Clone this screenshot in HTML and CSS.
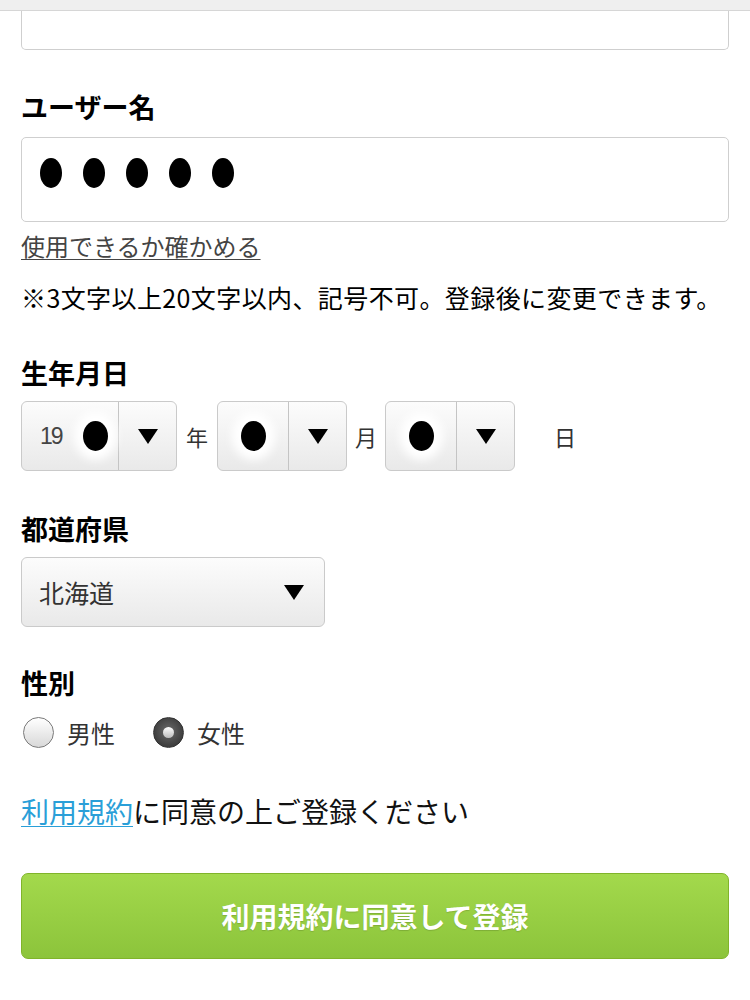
FILE: index.html
```html
<!DOCTYPE html>
<html lang="ja">
<head>
    <meta charset="UTF-8">
    <meta name="viewport" content="width=device-width, initial-scale=1.0">
    <title>会員登録</title>
    <link rel="stylesheet" href="styles.css">
</head>
<body>
    <div class="topbar"></div>

    <div class="container">
        <!-- 前の入力欄（上部が見切れている） -->
        <div class="field-cut"></div>

        <!-- ユーザー名 -->
        <h2 class="label label-user">ユーザー名</h2>
        <div class="text-input">
            <span class="dot"></span>
            <span class="dot"></span>
            <span class="dot"></span>
            <span class="dot"></span>
            <span class="dot"></span>
        </div>
        <a href="#" class="check-link">使用できるか確かめる</a>
        <p class="note">※3文字以上20文字以内、記号不可。登録後に変更できます。</p>

        <!-- 生年月日 -->
        <h2 class="label label-birth">生年月日</h2>
        <div class="birth-row">
            <div class="select select-year">
                <span class="select-value"><span class="year-prefix">19</span><span class="mask"></span></span>
                <span class="select-btn"><span class="arrow"></span></span>
            </div>
            <span class="unit">年</span>
            <div class="select select-small">
                <span class="select-value"><span class="mask"></span></span>
                <span class="select-btn"><span class="arrow"></span></span>
            </div>
            <span class="unit unit-month">月</span>
            <div class="select select-small">
                <span class="select-value"><span class="mask"></span></span>
                <span class="select-btn"><span class="arrow"></span></span>
            </div>
            <span class="unit unit-day">日</span>
        </div>

        <!-- 都道府県 -->
        <h2 class="label label-pref">都道府県</h2>
        <div class="select select-pref">
            <span class="pref-value">北海道</span>
            <span class="arrow"></span>
        </div>

        <!-- 性別 -->
        <h2 class="label label-sex">性別</h2>
        <div class="radio-row">
            <label class="radio">
                <span class="radio-circle"></span>
                <span class="radio-text">男性</span>
            </label>
            <label class="radio">
                <span class="radio-circle checked"></span>
                <span class="radio-text">女性</span>
            </label>
        </div>

        <p class="agree"><a href="#" class="terms-link">利用規約</a>に同意の上ご登録ください</p>

        <button class="submit">利用規約に同意して登録</button>
    </div>
</body>
</html>
```

FILE: styles.css
```css
body {
    margin: 0;
    background: #fff;
    color: #000;
    font-family: "Noto Sans CJK JP", "Noto Sans", sans-serif;
}

.topbar {
    height: 10px;
    background-color: #efefef;
    border-bottom: 1px solid #d6d6d6;
}

.container {
    padding: 0 21px 40px;
}

.field-cut {
    height: 38px;
    border: 1px solid #cfcfcf;
    border-top: none;
    border-radius: 0 0 5px 5px;
}

/* 見出し */
.label {
    margin: 0;
    font-size: 27px;
    line-height: 27px;
    font-weight: bold;
}

.label-user {
    margin-top: 43px;
}

.label-birth {
    margin-top: 49px;
}

.label-pref {
    margin-top: 44px;
}

.label-sex {
    margin-top: 42px;
}

/* ユーザー名入力 */
.text-input {
    margin-top: 17px;
    height: 85px;
    border: 1px solid #cfcfcf;
    border-radius: 5px;
    display: flex;
    align-items: flex-start;
    gap: 21px;
    padding: 20px 0 0 18px;
    box-sizing: border-box;
}

.dot {
    width: 22px;
    height: 30px;
    border-radius: 50%;
    background: #000;
}

.check-link {
    display: inline-block;
    margin-top: 12px;
    font-size: 24px;
    line-height: 24px;
    color: #444;
    text-decoration: underline;
    text-underline-offset: 3px;
    text-decoration-thickness: 1px;
}

.note {
    margin: 24px 0 0;
    font-size: 25px;
    line-height: 25px;
    letter-spacing: 0.4px;
}

/* セレクト */
.select {
    display: flex;
    height: 68px;
    border: 1px solid #cacaca;
    border-radius: 6px;
    background: linear-gradient(#fcfcfc, #e9e9e9);
    box-sizing: content-box;
}

.birth-row {
    margin-top: 15px;
    display: flex;
    align-items: center;
}

.select-value {
    display: flex;
    align-items: center;
    justify-content: center;
    border-right: 1px solid #c4c4c4;
}

.select-year .select-value {
    width: 97px;
    justify-content: flex-start;
    padding-left: 18px;
    box-sizing: border-box;
}

.select-small .select-value {
    width: 70px;
}

.year-prefix {
    font-family: "Liberation Sans", Arial, sans-serif;
    font-size: 23px;
    color: #444;
    letter-spacing: -2px;
    margin-right: 21px;
}

.mask {
    width: 25px;
    height: 30px;
    border-radius: 50%;
    background: #000;
    box-shadow: 0 0 10px 9px #fff;
}

.select-btn {
    width: 57px;
    display: flex;
    align-items: center;
    justify-content: center;
}

.arrow {
    width: 0;
    height: 0;
    border-left: 10px solid transparent;
    border-right: 10px solid transparent;
    border-top: 15px solid #000;
}

.unit {
    font-size: 22px;
    color: #333;
    width: 40px;
    text-align: center;
}

.unit-month {
    width: 38px;
}

.unit-day {
    margin-left: 30px;
}

.select-pref {
    margin-top: 15px;
    width: 304px;
    align-items: center;
    justify-content: space-between;
    padding: 0 20px 0 17px;
    box-sizing: border-box;
    height: 70px;
}

.pref-value {
    font-size: 25px;
    color: #333;
}

/* ラジオ */
.radio-row {
    margin-top: 19px;
    display: flex;
    gap: 36px;
}

.radio {
    display: flex;
    align-items: center;
    gap: 13px;
}

.radio-circle {
    width: 29px;
    height: 29px;
    border-radius: 50%;
    border: 1px solid #7a7a7a;
    background: linear-gradient(#fff, #d8d8d8);
    margin-left: 2px;
    position: relative;
}

.radio-circle.checked {
    border-color: #333;
    background: radial-gradient(circle at 50% 45%, #6a6a6a, #3e3e3e 70%);
}

.radio-circle.checked::after {
    content: "";
    position: absolute;
    left: 9px;
    top: 9px;
    width: 11px;
    height: 11px;
    border-radius: 50%;
    background: linear-gradient(#fff, #bbb);
}

.radio-text {
    font-size: 24px;
    color: #333;
}

/* 同意 */
.agree {
    margin: 47px 0 0;
    font-size: 28px;
    line-height: 28px;
    color: #111;
}

.terms-link {
    color: #2a9fd8;
    text-decoration: underline;
    text-underline-offset: 3px;
    text-decoration-thickness: 1px;
}

.submit {
    display: block;
    margin-top: 48px;
    width: 100%;
    height: 86px;
    border: 1px solid #80b42a;
    border-radius: 7px;
    background: linear-gradient(#a3d94c, #8cc43b);
    color: #fff;
    font-family: "Noto Sans CJK JP", sans-serif;
    font-size: 28px;
    font-weight: bold;
    text-shadow: 0 1px 1px rgba(0, 0, 0, 0.15);
    cursor: pointer;
}
```
